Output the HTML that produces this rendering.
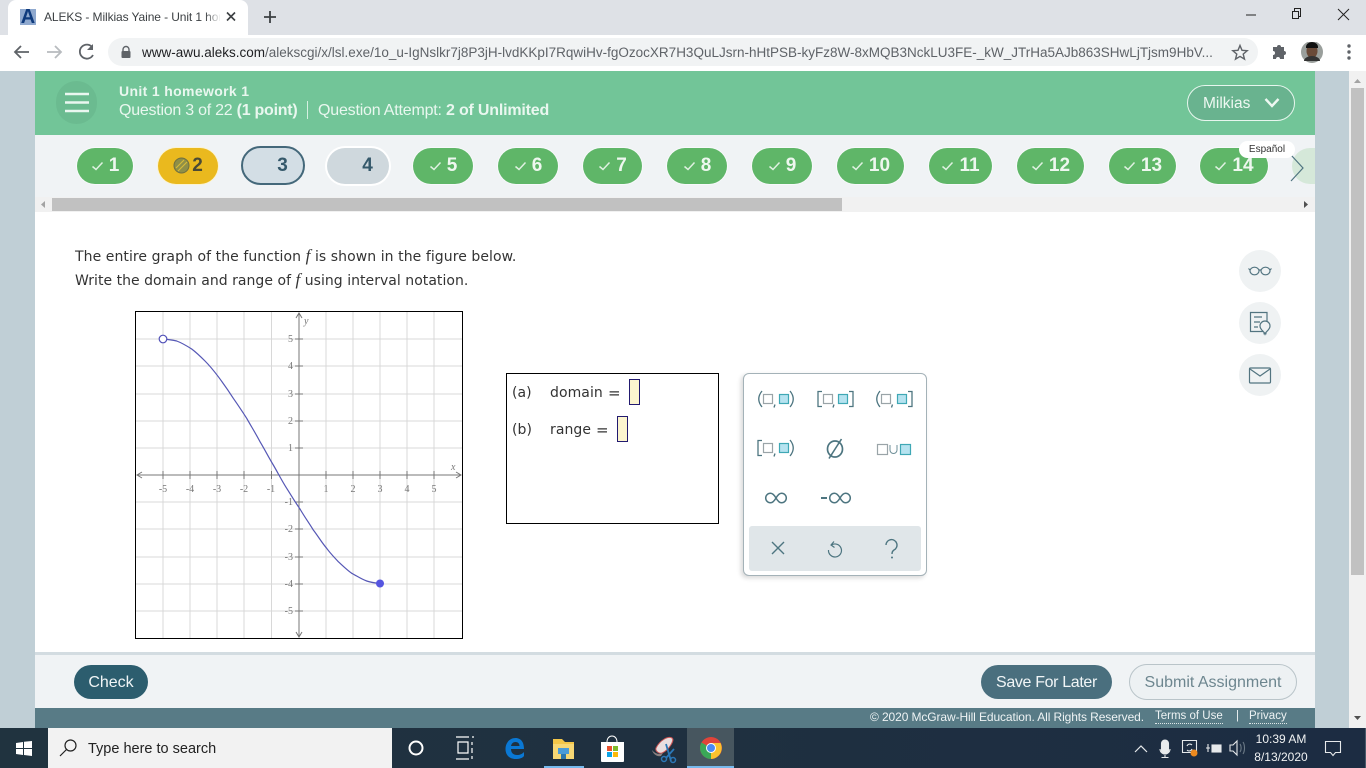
<!DOCTYPE html>
<html><head><meta charset="utf-8"><style>
*{box-sizing:border-box}
html,body{margin:0;padding:0;width:1366px;height:768px;overflow:hidden;background:#fff;font-family:"Liberation Sans",sans-serif}
.a{position:absolute;white-space:nowrap}
.pill{position:absolute;top:148px;height:36px;border-radius:18px;background:#5fb668;color:#eef7ef;font-weight:bold;font-size:19px;line-height:36px;text-align:center;box-shadow:0 0 0 1px #f7f9fa}
.pill svg{display:inline-block;vertical-align:0;margin-right:5px}
.q{font-family:"DejaVu Sans",sans-serif;font-size:14px;color:#333;letter-spacing:.07px}
.btn{position:absolute;border-radius:18px;font-size:16px;text-align:center}
</style></head><body>
<!-- chrome -->
<div class="a" style="left:0;top:0;width:1366px;height:35px;background:#dee1e6"></div>
<div class="a" style="left:8px;top:0;width:240px;height:35px;background:#fff;border-radius:8px 8px 0 0"></div>
<div class="a" style="left:0;top:35px;width:1366px;height:36px;background:#fff"></div>
<div class="a" style="left:20px;top:9px;width:16px;height:16px;background:#8fa9cf"></div>
<div class="a" style="left:20px;top:7px;width:16px;height:19px;font-weight:bold;font-size:20px;line-height:20px;color:#0f3b7d;text-align:center">A</div>
<div class="a" style="left:44px;top:9px;font-size:12px;line-height:16px;color:#3c4043;width:176px;overflow:hidden;letter-spacing:-.1px">ALEKS - Milkias Yaine - Unit 1 homework 1</div>
<div class="a" style="left:205px;top:8px;width:16px;height:18px;background:linear-gradient(90deg,rgba(255,255,255,0),#fff)"></div>
<svg class="a" style="left:0;top:0" width="1366" height="71" fill="none">
<path d="M227 12.500l8 8M235 12.500l-8 8" stroke="#3c4043" stroke-width="1.600"/>
<path d="M270 11v12M264 17h12" stroke="#3c4043" stroke-width="1.800"/>
<path d="M1246 15h10" stroke="#222" stroke-width="1"/>
<path d="M1292.500 11.500h6v7h-6zM1294.500 11v-2.500h6v8h-2" stroke="#222" stroke-width="1"/>
<path d="M1338 9l11 11M1349 9l-11 11" stroke="#222" stroke-width="1"/>
<path d="M29 52H15M21 46l-6 6 6 6" stroke="#5f6368" stroke-width="1.800"/>
<path d="M61 52H47M55 46l6 6-6 6" stroke="#b8bbbf" stroke-width="1.800"/>
<path d="M92.500 47.500A7 7 0 1 0 93 55" stroke="#5f6368" stroke-width="1.800"/><path d="M93 44v6h-6z" fill="#5f6368"/>
</svg>
<div class="a" style="left:108px;top:38px;width:1150px;height:28px;border-radius:14px;background:#f1f3f4"></div>
<svg class="a" style="left:120px;top:45px" width="12" height="14"><path d="M3 6V4.500a3 3 0 0 1 6 0V6" stroke="#5f6368" fill="none" stroke-width="1.400"/><rect x="1.500" y="6" width="9" height="7" rx="1" fill="#5f6368"/></svg>
<div class="a" style="left:142px;top:45px;font-size:13.500px;line-height:16px;color:#5f6368;width:1075px;overflow:hidden"><span style="color:#202124">www-awu.aleks.com</span>/alekscgi/x/lsl.exe/1o_u-IgNslkr7j8P3jH-lvdKKpI7RqwiHv-fgOzocXR7H3QuLJsrn-hHtPSB-kyFz8W-8xMQB3NckLU3FE-_kW_JTrHa5AJb863SHwLjTjsm9HbV...</div>
<svg class="a" style="left:1230px;top:42px" width="136" height="22" fill="none">
<path d="M10 3.500l2 4.800 5.200.4-4 3.400 1.300 5-4.500-2.700-4.500 2.700 1.300-5-4-3.400 5.200-.4z" stroke="#5f6368" stroke-width="1.400"/>
<path d="M43 5h4a2 2 0 0 1 4 0h3v4a2 2 0 0 1 0 4v4h-4a2 2 0 0 0-4 0h-3v-4a2 2 0 0 0 0-4z" fill="#5f6368"/>
<circle cx="82" cy="10" r="11" fill="#9a9f9c"/><ellipse cx="82" cy="9" rx="5.500" ry="7" fill="#6a4a38"/><path d="M76 5a6 5 0 0 1 12 0v1H76z" fill="#111"/><path d="M74 19a8 5 0 0 1 16 0z" fill="#333"/>
<circle cx="119" cy="4" r="1.700" fill="#5f6368"/><circle cx="119" cy="10" r="1.700" fill="#5f6368"/><circle cx="119" cy="16" r="1.700" fill="#5f6368"/>
</svg>
<!-- page bg -->
<div class="a" style="left:0;top:71px;width:35px;height:657px;background:#c0cfd6"></div>
<div class="a" style="left:1315px;top:71px;width:34px;height:657px;background:#c0cfd6"></div>
<div class="a" style="left:1349px;top:71px;width:17px;height:657px;background:#f1f1f1"></div>
<div class="a" style="left:1351px;top:88px;width:13px;height:487px;background:#c1c1c1"></div>
<svg class="a" style="left:1349px;top:71px" width="17" height="657"><path d="M5 12l3.500-4 3.500 4z" fill="#a3a3a3"/><path d="M5 645l3.500 4 3.500-4z" fill="#505050"/></svg>
<!-- header -->
<div class="a" style="left:35px;top:71px;width:1280px;height:64px;background:#72c598"></div>
<div class="a" style="left:56px;top:81px;width:41px;height:43px;border-radius:22px;background:#6bbb90"></div>
<svg class="a" style="left:64px;top:92px" width="26" height="22"><path d="M1 2h24M1 10.500h24M1 19h24" stroke="#eaf7f0" stroke-width="2.400"/></svg>
<div class="a" style="left:119px;top:83px;font-size:14px;font-weight:bold;line-height:16px;color:#e9f7ef;letter-spacing:.35px">Unit 1 homework 1</div>
<div class="a" style="left:119px;top:101px;font-size:16px;line-height:20px;color:#e9f7ef;letter-spacing:-.25px">Question 3 of 22 <b>(1 point)</b></div>
<div class="a" style="left:307px;top:101px;width:1px;height:18px;background:#d5f0e1"></div>
<div class="a" style="left:318px;top:101px;font-size:16px;line-height:20px;color:#e9f7ef;letter-spacing:-.2px">Question Attempt: <b>2 of Unlimited</b></div>
<div class="a" style="left:1187px;top:85px;width:108px;height:36px;border-radius:18px;border:1px solid #e7f6ee;background:#69b38f"></div>
<div class="a" style="left:1203px;top:94px;font-size:15.500px;line-height:20px;color:#eef8f2">Milkias</div>
<svg class="a" style="left:1264px;top:97px" width="16" height="12"><path d="M1.500 2l6.500 7 6.500-7" fill="none" stroke="#eef8f2" stroke-width="2.400"/></svg>
<!-- nav band -->
<div class="a" style="left:35px;top:135px;width:1280px;height:77px;background:#f0f3f5"></div>
<div class="pill" style="left:77px;width:56px"><svg width="13" height="10"><path d="M1.500 5.500l3.500 3 6.500-7" fill="none" stroke="#dff1e1" stroke-width="1.500"/></svg>1</div>
<div class="pill" style="left:158px;width:60px;background:#eab91e;color:#4a4a36;box-shadow:0 0 0 1px #fbf3d0"><svg width="17" height="17" style="vertical-align:-3px;margin-right:2px"><circle cx="8.500" cy="8.500" r="7.500" fill="#8f8f47" stroke="#6f6f40"/><path d="M3 11l8-8M5 14l9-9" stroke="#d6bb3a" stroke-width="1.200"/></svg>2</div>
<div class="pill" style="left:241px;top:146px;height:39px;width:64px;background:#d3dee5;border:2px solid #44687a;color:#35596b;box-shadow:none;line-height:36px;border-radius:20px;padding-left:19px">3</div>
<div class="pill" style="left:327px;width:62px;background:#cfd8dd;color:#35596b;box-shadow:0 0 0 2px #fff;padding-left:19px">4</div>
<div class="pill" style="left:413px;width:60px"><svg width="13" height="10"><path d="M1.500 5.500l3.500 3 6.500-7" fill="none" stroke="#dff1e1" stroke-width="1.500"/></svg>5</div>
<div class="pill" style="left:498px;width:60px"><svg width="13" height="10"><path d="M1.500 5.500l3.500 3 6.500-7" fill="none" stroke="#dff1e1" stroke-width="1.500"/></svg>6</div>
<div class="pill" style="left:583px;width:59px"><svg width="13" height="10"><path d="M1.500 5.500l3.500 3 6.500-7" fill="none" stroke="#dff1e1" stroke-width="1.500"/></svg>7</div>
<div class="pill" style="left:667px;width:60px"><svg width="13" height="10"><path d="M1.500 5.500l3.500 3 6.500-7" fill="none" stroke="#dff1e1" stroke-width="1.500"/></svg>8</div>
<div class="pill" style="left:752px;width:60px"><svg width="13" height="10"><path d="M1.500 5.500l3.500 3 6.500-7" fill="none" stroke="#dff1e1" stroke-width="1.500"/></svg>9</div>
<div class="pill" style="left:837px;width:67px"><svg width="13" height="10"><path d="M1.500 5.500l3.500 3 6.500-7" fill="none" stroke="#dff1e1" stroke-width="1.500"/></svg>10</div>
<div class="pill" style="left:929px;width:63px"><svg width="13" height="10"><path d="M1.500 5.500l3.500 3 6.500-7" fill="none" stroke="#dff1e1" stroke-width="1.500"/></svg>11</div>
<div class="pill" style="left:1017px;width:67px"><svg width="13" height="10"><path d="M1.500 5.500l3.500 3 6.500-7" fill="none" stroke="#dff1e1" stroke-width="1.500"/></svg>12</div>
<div class="pill" style="left:1109px;width:67px"><svg width="13" height="10"><path d="M1.500 5.500l3.500 3 6.500-7" fill="none" stroke="#dff1e1" stroke-width="1.500"/></svg>13</div>
<div class="pill" style="left:1200px;width:68px"><svg width="13" height="10"><path d="M1.500 5.500l3.500 3 6.500-7" fill="none" stroke="#dff1e1" stroke-width="1.500"/></svg>14</div>
<div class="a" style="left:1292px;top:148px;width:23px;height:36px;border-radius:18px 0 0 18px;background:#d5e8d9"></div>
<svg class="a" style="left:1289px;top:153px" width="18" height="30"><path d="M2 2l12 13L2 28" fill="none" stroke="#4f7480" stroke-width="1.200"/></svg>
<div class="a" style="left:1239px;top:141px;width:56px;height:17px;border-radius:9px;background:#fff;font-size:10px;line-height:17px;text-align:center;color:#333">Español</div>
<!-- h scrollbar -->
<div class="a" style="left:35px;top:197px;width:1280px;height:15px;background:#f1f1f1"></div>
<div class="a" style="left:52px;top:198px;width:790px;height:13px;background:#c1c1c1"></div>
<svg class="a" style="left:35px;top:197px" width="1280" height="15"><path d="M10 4l-4 3.500 4 3.500z" fill="#a3a3a3"/><path d="M1269 4l4 3.500-4 3.500z" fill="#505050"/></svg>
<!-- main -->
<div class="a q" style="left:75px;top:247px;line-height:18px">The entire graph of the function <i style="font-family:'Liberation Serif',serif;font-size:17px">f</i> is shown in the figure below.</div>
<div class="a q" style="left:75px;top:271px;line-height:18px;letter-spacing:.03px">Write the domain and range of <i style="font-family:'Liberation Serif',serif;font-size:17px">f</i> using interval notation.</div>
<!-- graph -->
<svg class="a" style="left:135px;top:311px" width="328" height="328" font-family="Liberation Serif,serif" font-size="10" fill="#777">
<rect x=".5" y=".5" width="327" height="327" fill="#fff"/>
<g stroke="#d8d8d8" stroke-width="1">
<path d="M28 1v326M55 1v326M82 1v326M109 1v326M136.500 1v326M191 1v326M218 1v326M245 1v326M272 1v326M299 1v326"/>
<path d="M1 28h326M1 55h326M1 83h326M1 110h326M1 137h326M1 191h326M1 218h326M1 246h326M1 273h326M1 300h326"/>
</g>
<g stroke="#777" stroke-width="1" fill="none">
<path d="M164 2v324M2 164h324"/>
<path d="M161 7l3-5 3 5M161 321l3 5 3-5M7 161l-5 3 5 3M321 161l5 3-5 3"/>
<path d="M28 160v8M55 160v8M82 160v8M109 160v8M136.500 160v8M191 160v8M218 160v8M245 160v8M272 160v8M299 160v8M160 28h8M160 55h8M160 83h8M160 110h8M160 137h8M160 191h8M160 218h8M160 246h8M160 273h8M160 300h8"/>
</g>
<g text-anchor="middle">
<text x="28" y="181">-5</text><text x="55" y="181">-4</text><text x="82" y="181">-3</text><text x="109" y="181">-2</text><text x="136" y="181">-1</text><text x="191" y="181">1</text><text x="218" y="181">2</text><text x="245" y="181">3</text><text x="272" y="181">4</text><text x="299" y="181">5</text>
</g>
<g text-anchor="end">
<text x="158" y="31">5</text><text x="158" y="58">4</text><text x="158" y="86">3</text><text x="158" y="113">2</text><text x="158" y="140">1</text><text x="158" y="194">-1</text><text x="158" y="221">-2</text><text x="158" y="249">-3</text><text x="158" y="276">-4</text><text x="158" y="303">-5</text>
</g>
<text x="169" y="13" font-style="italic">y</text><text x="316" y="159" font-style="italic">x</text>
<path d="M28 28 C33 28.500 37 29 41.700 30 C47 32 52 35 56.700 38 C62 42 66 46 70 50 C75 55 79 60 83.300 65.700 C88 72 93 79 98.300 87.300 C103 94 107 100 111.700 107.300 C116 115 121 123 125 130.700 C130 139 134 147 138.300 154 C143 162 147 170 151.700 177.300 C156 184 160 191 165 198 C169 205 174 212 178.300 219 C183 225 187 232 191.700 237.300 C195 242 199 246 203.300 250.700 C208 255 212 259 216.700 262.300 C222 265 226 268 231.700 270 C236 271.500 240 272 245 272.500" fill="none" stroke="#5557b5" stroke-width="1.200"/>
<circle cx="28" cy="28" r="3.800" fill="#fff" stroke="#5050b8" stroke-width="1.200"/>
<circle cx="245" cy="272.500" r="4" fill="#5555e0"/>
<rect x=".5" y=".5" width="327" height="327" fill="none" stroke="#000"/>
</svg>
<!-- answer -->
<div class="a" style="left:506px;top:373px;width:213px;height:151px;border:1px solid #000;background:#fff"></div>
<div class="a q" style="left:512px;top:384px;line-height:18px">(a)</div>
<div class="a q" style="left:550px;top:384px;line-height:18px">domain</div>
<div class="a q" style="left:608px;top:384px;line-height:18px;font-size:15px">=</div>
<div class="a" style="left:629px;top:379px;width:11px;height:26px;background:#fcf5cf;border:1px solid #221a70"></div>
<div class="a q" style="left:512px;top:421px;line-height:18px">(b)</div>
<div class="a q" style="left:550px;top:421px;line-height:18px">range</div>
<div class="a q" style="left:596px;top:421px;line-height:18px;font-size:15px">=</div>
<div class="a" style="left:617px;top:416px;width:11px;height:26px;background:#fcf5cf;border:1px solid #221a70"></div>
<!-- keypad -->
<div class="a" style="left:743px;top:373px;width:184px;height:203px;border:1px solid #a4b2b8;border-radius:6px;background:#fff;box-shadow:-2px 2px 5px rgba(0,0,0,.16)"></div>
<div class="a" style="left:749px;top:526px;width:172px;height:45px;border-radius:3px;background:#e0e6e9"></div>
<svg class="a" style="left:743px;top:373px" width="184" height="203" fill="none">
<g stroke="#4d7580" stroke-width="1.300">
<path d="M19 18Q12.500 26 19 34M47 18Q53.500 26 47 34"/>
<path d="M79 18.500h-4v15h4M106 18.500h4v15h-4"/>
<path d="M137 18Q130.500 26 137 34M165 18.500h4v15h-4"/>
<path d="M19 67.500h-4v15h4M47 67Q53.500 75 47 83"/>
<path d="M32 31.500l-1 3M91 31.500l-1 3M149.500 31.500l-1 3M32 80.500l-1 3"/>
</g>
<g stroke="#9aa4a8" stroke-width="1.200" fill="#fff">
<rect x="20.500" y="21.500" width="9" height="9"/><rect x="80.500" y="21.500" width="9" height="9"/><rect x="138.500" y="21.500" width="9" height="9"/><rect x="20.500" y="70.500" width="9" height="9"/><rect x="134.500" y="71.500" width="10" height="10"/>
</g>
<g stroke="#3fa8b5" stroke-width="1.200" fill="#b6e3f0">
<rect x="36.500" y="21.500" width="9" height="9"/><rect x="95.500" y="21.500" width="9" height="9"/><rect x="154.500" y="21.500" width="9" height="9"/><rect x="36.500" y="70.500" width="9" height="9"/><rect x="157.500" y="71.500" width="10" height="10"/>
</g>
<path d="M147 72v5a3.500 3.500 0 0 0 7 0v-5" stroke="#6e8f98" stroke-width="1"/>
<ellipse cx="92" cy="76" rx="7.500" ry="8" stroke="#4d7580" stroke-width="1.700"/><path d="M86 85.500l12.500-19.500" stroke="#4d7580" stroke-width="1.600"/>
<g stroke="#4d7580" stroke-width="1.500">
<path d="M33 125c-2-3.500-3.500-4.800-5.500-4.800a4.800 4.800 0 0 0 0 9.600c2 0 3.500-1.300 5.500-4.800c2-3.500 3.500-4.800 5.500-4.800a4.800 4.800 0 0 1 0 9.600c-2 0-3.500-1.300-5.500-4.800z"/>
<path d="M97 125c-2-3.500-3.500-4.800-5.500-4.800a4.800 4.800 0 0 0 0 9.600c2 0 3.500-1.300 5.500-4.800c2-3.500 3.500-4.800 5.500-4.800a4.800 4.800 0 0 1 0 9.600c-2 0-3.500-1.300-5.500-4.800z"/>
</g>
<path d="M78 125h6" stroke="#4d7580" stroke-width="2"/>
<path d="M29 169l12 12M41 169l-12 12" stroke="#4d7580" stroke-width="1.400"/>
<path d="M88.500 172a6.500 6.500 0 1 1-3 5M91 168.500l-3 3.500 3.500 2.500" stroke="#4d7580" stroke-width="1.200"/>
<path d="M143 172a5.500 5.500 0 1 1 8 5c-1.500 1-2 2-2 4" stroke="#4d7580" stroke-width="1.400"/><circle cx="149" cy="184.500" r="1" fill="#4d7580"/>
</svg>
<!-- side icons -->
<div class="a" style="left:1239px;top:250px;width:42px;height:42px;border-radius:50%;background:#eff2f3"></div>
<div class="a" style="left:1239px;top:302px;width:42px;height:42px;border-radius:50%;background:#eff2f3"></div>
<div class="a" style="left:1239px;top:354px;width:42px;height:42px;border-radius:50%;background:#eff2f3"></div>
<svg class="a" style="left:1239px;top:250px" width="42" height="146" fill="none" stroke="#527480" stroke-width="1.200">
<ellipse cx="15.500" cy="21" rx="4.500" ry="3.800"/><ellipse cx="26.500" cy="21" rx="4.500" ry="3.800"/><path d="M20 20h2M11 20l-1.500-1.500M31 20l1.500-1.500"/>
<path d="M25 81.500H11.500v-19h16.500v9M15 67h8M15 72h6M15 77h4"/><path d="M26 84c-1-3-5-4-5-8a5 5 0 0 1 10 0c0 4-4 5-5 8z" fill="#eff2f3"/><path d="M24.500 83.500h3" stroke-width="1.800"/>
<rect x="10.500" y="118" width="21" height="15" rx="1"/><path d="M11 119l10 7 10-7"/>
</svg>
<!-- footer -->
<div class="a" style="left:35px;top:652px;width:1280px;height:3px;background:#d3dce1"></div>
<div class="a" style="left:35px;top:655px;width:1280px;height:53px;background:#f0f3f5"></div>
<div class="a" style="left:35px;top:708px;width:1280px;height:20px;background:#587b86"></div>
<div class="btn" style="left:74px;top:665px;width:74px;height:34px;background:#2c5d6e;color:#f0f5f6;line-height:35px">Check</div>
<div class="btn" style="left:981px;top:665px;width:131px;height:34px;background:#4a6f7e;color:#f0f5f6;line-height:35px;letter-spacing:-.35px">Save For Later</div>
<div class="btn" style="left:1129px;top:664px;width:168px;height:36px;border:1px solid #b9c4c9;background:#edf1f3;color:#6d868f;line-height:36px">Submit Assignment</div>
<div class="a" style="left:870px;top:710px;font-size:12px;line-height:15px;color:#eef3f4;letter-spacing:-.1px">© 2020 McGraw-Hill Education. All Rights Reserved.</div>
<div class="a" style="left:1155px;top:710px;font-size:11.500px;line-height:13px;color:#eef3f4;border-bottom:1px dotted #dfe7e9">Terms of Use</div>
<div class="a" style="left:1236px;top:709px;font-size:11.500px;line-height:15px;color:#eef3f4">|</div>
<div class="a" style="left:1249px;top:710px;font-size:11.500px;line-height:13px;color:#eef3f4;border-bottom:1px dotted #dfe7e9">Privacy</div>
<!-- taskbar -->
<div class="a" style="left:0;top:728px;width:1366px;height:40px;background:linear-gradient(90deg,#20333f,#1f3040 50%,#1c2c42)"></div>
<svg class="a" style="left:16px;top:741px" width="16" height="15"><path d="M0 2l7-1v6H0zM8 .8L16 0v7H8zM0 8h7v6l-7-1zM8 8h8v7l-8-1z" fill="#fff"/></svg>
<div class="a" style="left:48px;top:728px;width:344px;height:40px;background:#f2f2f2"></div>
<svg class="a" style="left:59px;top:738px" width="20" height="20" fill="none" stroke="#222" stroke-width="1.200"><circle cx="11.500" cy="7.500" r="5.500"/><path d="M7.500 11.500L1 18"/></svg>
<div class="a" style="left:88px;top:740px;font-size:14.500px;line-height:19px;color:#222">Type here to search</div>
<svg class="a" style="left:400px;top:728px" width="340" height="40" fill="none">
<circle cx="16" cy="20" r="6.500" stroke="#fff" stroke-width="2"/>
<path d="M56 9h13M56 31h13M58 14h10v11H58zM72 9h2M72 14v3M72 20v5M72 28v3" stroke="#fff" stroke-width="1.200"/>
<path d="M107 21h17c0-8-4-11-8.500-11c-6 0-10 5-10 11c0 6 4 10 10 10c4 0 7-1 8.500-3v-4c-2 2-4 3-7 3c-3.500 0-6-2-6-6zM111 18c.500-2.500 2-4 4.500-4c2.500 0 4 1.500 4 4z" fill="#0a78d4" fill-rule="evenodd"/>
<path d="M153 11h9l3 3h9v17h-21z" fill="#f3c649"/><path d="M153 16h21v15h-21z" fill="#f7d774"/><path d="M158 20h11v6h-11z" fill="#4a9bd8"/><path d="M161 26h5v5h-5z" fill="#2f77ab"/>
<path d="M201 14h23v19a1 1 0 0 1-1 1h-21a1 1 0 0 1-1-1z" fill="#fff"/><path d="M207 14c0-8 10-8 10 0" stroke="#fff"/><rect x="207" y="18" width="5" height="5" fill="#e8512e"/><rect x="213" y="18" width="5" height="5" fill="#7fbb2c"/><rect x="207" y="24" width="5" height="5" fill="#0ea3e5"/><rect x="213" y="24" width="5" height="5" fill="#fcb90a"/>
<path d="M256 20c4-8 12-12 16-10c3 2-3 12-10 15c-3 1-7-2-6-5z" fill="#e9dfe0" stroke="#c55"/><path d="M252 22c3 4 8 5 11 3l-2 3c-4 1-8-2-9-6z" fill="#8a8080"/><path d="M266 16l5 17M274 21l-8 9" stroke="#2b78b8" stroke-width="1.800"/><circle cx="264" cy="31" r="2.500" stroke="#2b78b8" stroke-width="1.500"/><circle cx="273" cy="32" r="2.500" stroke="#2b78b8" stroke-width="1.500"/>
</svg>
<div class="a" style="left:687px;top:728px;width:47px;height:40px;background:#47565f"></div>
<div class="a" style="left:687px;top:766px;width:47px;height:2px;background:#76b9ed"></div>
<div class="a" style="left:544px;top:766px;width:40px;height:2px;background:#76b9ed"></div>
<svg class="a" style="left:700px;top:737px" width="22" height="22" viewBox="0 0 22 22"><circle cx="11" cy="11" r="11" fill="#e0443a"/><path d="M11 11L1.500 5.500A11 11 0 0 0 11 22z" fill="#3aa757"/><path d="M11 6h9.500A11 11 0 0 1 11 22z" fill="#f9c22e"/><circle cx="11" cy="11" r="5" fill="#fff"/><circle cx="11" cy="11" r="4" fill="#4a8af4"/></svg>
<svg class="a" style="left:1130px;top:728px" width="236" height="40" fill="none" stroke="#e6e9eb" stroke-width="1.100">
<path d="M5 24l6-6 6 6" stroke-width="1.200"/>
<rect x="31.500" y="12" width="7" height="14" rx="3.500" fill="#e8ebed"/><path d="M30 21a5 5 0 0 0 10 0M35 27v2M31.500 29.500h7"/>
<path d="M52.500 12.500h14v12h-14z"/><path d="M57 18a3 3 0 0 1 5-1M62 21a3 3 0 0 1-5 1"/><circle cx="64" cy="25" r="3.500" fill="#ed8a1f" stroke="none"/>
<path d="M76 20h4M78 16v8"/><rect x="82" y="17" width="9" height="7" fill="#e6e9eb"/>
<path d="M100 17h3l4-4v14l-4-4h-3z"/><path d="M110 16c1.500 2 1.500 6 0 8M113 14c2 3 2 9 0 12" stroke="#6b7a86"/>
<path d="M195.500 13.500h15v11h-5l-2.500 3-2.500-3h-5z"/>
<path d="M235.500 0v40" stroke="#4a5b6b"/>
</svg>
<div class="a" style="left:1251px;top:731px;width:60px;text-align:center;font-size:12px;line-height:16px;color:#f0f2f3">10:39 AM</div>
<div class="a" style="left:1251px;top:749px;width:60px;text-align:center;font-size:12px;line-height:16px;color:#f0f2f3">8/13/2020</div>
</body></html>
